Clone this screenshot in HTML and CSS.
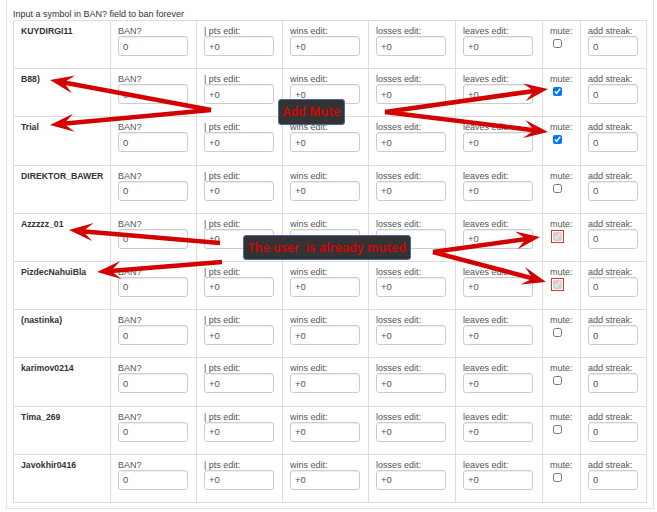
FILE: index.html
```html
<!DOCTYPE html>
<html>
<head>
<meta charset="utf-8">
<link rel="stylesheet" href="styles.css">
</head>
<body>
<div class="panel">
  <div class="intro">Input a symbol in BAN? field to ban forever</div>
  <table class="players">
    <colgroup>
      <col class="c-name"><col class="c-mid"><col class="c-mid"><col class="c-mid"><col class="c-wide"><col class="c-wide"><col class="c-mute"><col class="c-streak">
    </colgroup>
    <tbody>
      <tr>
        <td><span class="name">KUYDIRGI11</span></td>
        <td><span class="lbl">BAN?</span><input class="inp" value="0"></td>
        <td><span class="lbl">| pts edit:</span><input class="inp" value="+0"></td>
        <td><span class="lbl">wins edit:</span><input class="inp" value="+0"></td>
        <td><span class="lbl">losses edit:</span><input class="inp" value="+0"></td>
        <td><span class="lbl">leaves edit:</span><input class="inp" value="+0"></td>
        <td><span class="lbl">mute:</span><input type="checkbox" class="chk"></td>
        <td><span class="lbl">add streak:</span><input class="inp inp-s" value="0"></td>
      </tr>
      <tr>
        <td><span class="name">B88)</span></td>
        <td><span class="lbl">BAN?</span><input class="inp" value="0"></td>
        <td><span class="lbl">| pts edit:</span><input class="inp" value="+0"></td>
        <td><span class="lbl">wins edit:</span><input class="inp" value="+0"></td>
        <td><span class="lbl">losses edit:</span><input class="inp" value="+0"></td>
        <td><span class="lbl">leaves edit:</span><input class="inp" value="+0"></td>
        <td><span class="lbl">mute:</span><input type="checkbox" class="chk" checked></td>
        <td><span class="lbl">add streak:</span><input class="inp inp-s" value="0"></td>
      </tr>
      <tr>
        <td><span class="name">Trial</span></td>
        <td><span class="lbl">BAN?</span><input class="inp" value="0"></td>
        <td><span class="lbl">| pts edit:</span><input class="inp" value="+0"></td>
        <td><span class="lbl">wins edit:</span><input class="inp" value="+0"></td>
        <td><span class="lbl">losses edit:</span><input class="inp" value="+0"></td>
        <td><span class="lbl">leaves edit:</span><input class="inp" value="+0"></td>
        <td><span class="lbl">mute:</span><input type="checkbox" class="chk" checked></td>
        <td><span class="lbl">add streak:</span><input class="inp inp-s" value="0"></td>
      </tr>
      <tr>
        <td><span class="name">DIREKTOR_BAWER</span></td>
        <td><span class="lbl">BAN?</span><input class="inp" value="0"></td>
        <td><span class="lbl">| pts edit:</span><input class="inp" value="+0"></td>
        <td><span class="lbl">wins edit:</span><input class="inp" value="+0"></td>
        <td><span class="lbl">losses edit:</span><input class="inp" value="+0"></td>
        <td><span class="lbl">leaves edit:</span><input class="inp" value="+0"></td>
        <td><span class="lbl">mute:</span><input type="checkbox" class="chk"></td>
        <td><span class="lbl">add streak:</span><input class="inp inp-s" value="0"></td>
      </tr>
      <tr>
        <td><span class="name">Azzzzz_01</span></td>
        <td><span class="lbl">BAN?</span><input class="inp" value="0"></td>
        <td><span class="lbl">| pts edit:</span><input class="inp" value="+0"></td>
        <td><span class="lbl">wins edit:</span><input class="inp" value="+0"></td>
        <td><span class="lbl">losses edit:</span><input class="inp" value="+0"></td>
        <td><span class="lbl">leaves edit:</span><input class="inp" value="+0"></td>
        <td><span class="lbl">mute:</span><input type="checkbox" class="chk chk-flag" checked disabled></td>
        <td><span class="lbl">add streak:</span><input class="inp inp-s" value="0"></td>
      </tr>
      <tr>
        <td><span class="name">PizdecNahuiBla</span></td>
        <td><span class="lbl">BAN?</span><input class="inp" value="0"></td>
        <td><span class="lbl">| pts edit:</span><input class="inp" value="+0"></td>
        <td><span class="lbl">wins edit:</span><input class="inp" value="+0"></td>
        <td><span class="lbl">losses edit:</span><input class="inp" value="+0"></td>
        <td><span class="lbl">leaves edit:</span><input class="inp" value="+0"></td>
        <td><span class="lbl">mute:</span><input type="checkbox" class="chk chk-flag" checked disabled></td>
        <td><span class="lbl">add streak:</span><input class="inp inp-s" value="0"></td>
      </tr>
      <tr>
        <td><span class="name">(nastinka)</span></td>
        <td><span class="lbl">BAN?</span><input class="inp" value="0"></td>
        <td><span class="lbl">| pts edit:</span><input class="inp" value="+0"></td>
        <td><span class="lbl">wins edit:</span><input class="inp" value="+0"></td>
        <td><span class="lbl">losses edit:</span><input class="inp" value="+0"></td>
        <td><span class="lbl">leaves edit:</span><input class="inp" value="+0"></td>
        <td><span class="lbl">mute:</span><input type="checkbox" class="chk"></td>
        <td><span class="lbl">add streak:</span><input class="inp inp-s" value="0"></td>
      </tr>
      <tr>
        <td><span class="name">karimov0214</span></td>
        <td><span class="lbl">BAN?</span><input class="inp" value="0"></td>
        <td><span class="lbl">| pts edit:</span><input class="inp" value="+0"></td>
        <td><span class="lbl">wins edit:</span><input class="inp" value="+0"></td>
        <td><span class="lbl">losses edit:</span><input class="inp" value="+0"></td>
        <td><span class="lbl">leaves edit:</span><input class="inp" value="+0"></td>
        <td><span class="lbl">mute:</span><input type="checkbox" class="chk"></td>
        <td><span class="lbl">add streak:</span><input class="inp inp-s" value="0"></td>
      </tr>
      <tr>
        <td><span class="name">Tima_269</span></td>
        <td><span class="lbl">BAN?</span><input class="inp" value="0"></td>
        <td><span class="lbl">| pts edit:</span><input class="inp" value="+0"></td>
        <td><span class="lbl">wins edit:</span><input class="inp" value="+0"></td>
        <td><span class="lbl">losses edit:</span><input class="inp" value="+0"></td>
        <td><span class="lbl">leaves edit:</span><input class="inp" value="+0"></td>
        <td><span class="lbl">mute:</span><input type="checkbox" class="chk"></td>
        <td><span class="lbl">add streak:</span><input class="inp inp-s" value="0"></td>
      </tr>
      <tr>
        <td><span class="name">Javokhir0416</span></td>
        <td><span class="lbl">BAN?</span><input class="inp" value="0"></td>
        <td><span class="lbl">| pts edit:</span><input class="inp" value="+0"></td>
        <td><span class="lbl">wins edit:</span><input class="inp" value="+0"></td>
        <td><span class="lbl">losses edit:</span><input class="inp" value="+0"></td>
        <td><span class="lbl">leaves edit:</span><input class="inp" value="+0"></td>
        <td><span class="lbl">mute:</span><input type="checkbox" class="chk"></td>
        <td><span class="lbl">add streak:</span><input class="inp inp-s" value="0"></td>
      </tr>
    </tbody>
  </table>
</div>

<svg class="arrows" width="657" height="512" viewBox="0 0 657 512">
  <g class="shafts">
    <line x1="211" y1="110" x2="59.8" y2="81.8"/>
    <line x1="211" y1="110" x2="60" y2="124.1"/>
    <line x1="385" y1="112" x2="538.1" y2="90.4"/>
    <line x1="385" y1="112" x2="538.1" y2="130.8"/>
    <line x1="220" y1="243" x2="79" y2="230.9"/>
    <line x1="222" y1="262" x2="107" y2="271.2"/>
    <line x1="433" y1="252" x2="530.1" y2="238.4"/>
    <line x1="433" y1="252" x2="536.3" y2="279.4"/>
  </g>
  <g class="heads">
    <polygon points="50,80 75.2,75.5 63.8,82.6 71.9,93.2"/>
    <polygon points="50,125 73.1,113.8 63.9,123.7 74.7,131.7"/>
    <polygon points="548,89 523,83.5 534.1,91 525.5,101.3"/>
    <polygon points="548,132 525.3,120.1 534.1,130.3 523.1,138"/>
    <polygon points="69,230 93.7,223.1 82.9,231.2 92.1,241"/>
    <polygon points="97,272 120.2,261.1 111,270.9 121.6,279.1"/>
    <polygon points="540,237 515,231.4 526.1,238.9 517.5,249.2"/>
    <polygon points="546,282 525.1,267.1 532.5,278.4 520.5,284.5"/>
  </g>
</svg>

<div class="note note-add">Add Mute</div>
<div class="note note-muted">The user  is already muted</div>
</body>
</html>
```

FILE: styles.css
```css
html, body {
  margin: 0;
  padding: 0;
  background: #fff;
}

body {
  font-family: "Liberation Sans", Arial, sans-serif;
  color: #333;
  position: relative;
  width: 657px;
  height: 512px;
  overflow: hidden;
}

.panel {
  margin-left: 6px;
  width: 648px;
  box-sizing: border-box;
  border: 1px solid #e4e4e4;
  border-top: 0;
  padding: 8px 6px 5px;
}

.intro {
  font-size: 9px;
  line-height: 12px;
  color: #333;
}

.players {
  border-collapse: collapse;
  table-layout: fixed;
  width: 634px;
}

.c-name { width: 97px; }
.c-mid { width: 86px; }
.c-wide { width: 87px; }
.c-mute { width: 38px; }
.c-streak { width: 66px; }

.players tr {
  height: 48.2px;
}

.players td {
  border: 1px solid #ddd;
  vertical-align: top;
  padding: 5px 7px 0;
}

.name {
  display: block;
  font-weight: bold;
  font-size: 8.7px;
  line-height: 10px;
  color: #333;
}

.lbl {
  display: block;
  font-size: 9px;
  line-height: 10px;
  color: #555;
}

.inp {
  display: block;
  width: 70px;
  height: 20px;
  box-sizing: border-box;
  margin: 0;
  padding: 0 4px;
  border: 1px solid #ccc;
  border-radius: 3px;
  box-shadow: inset 0 1px 1px rgba(0, 0, 0, 0.075);
  font-family: "Liberation Sans", Arial, sans-serif;
  font-size: 9.5px;
  color: #555;
  background: #fff;
}

.inp-s {
  width: 50px;
}

.chk {
  display: block;
  width: 9px;
  height: 9px;
  margin: 3px 0 0 3px;
}

.chk-flag {
  outline: 1.5px solid #e03030;
  outline-offset: 1.5px;
}

.arrows {
  position: absolute;
  left: 0;
  top: 0;
  pointer-events: none;
}

.shafts line {
  stroke: #d40000;
  stroke-width: 4.5;
  stroke-linecap: butt;
}

.heads polygon {
  fill: #d40000;
}

.note {
  position: absolute;
  box-sizing: border-box;
  background: #333;
  border: 1px solid #4a68a8;
  border-radius: 3px;
  color: #e00000;
  font-family: "Open Sans", sans-serif;
  font-size: 12px;
  font-weight: 600;
  letter-spacing: 0.2px;
  text-align: center;
  white-space: pre;
}

.note-add {
  left: 278px;
  top: 99px;
  width: 67px;
  height: 26px;
  line-height: 24px;
}

.note-muted {
  left: 243px;
  top: 235px;
  width: 168px;
  height: 25px;
  line-height: 23px;
}
```
